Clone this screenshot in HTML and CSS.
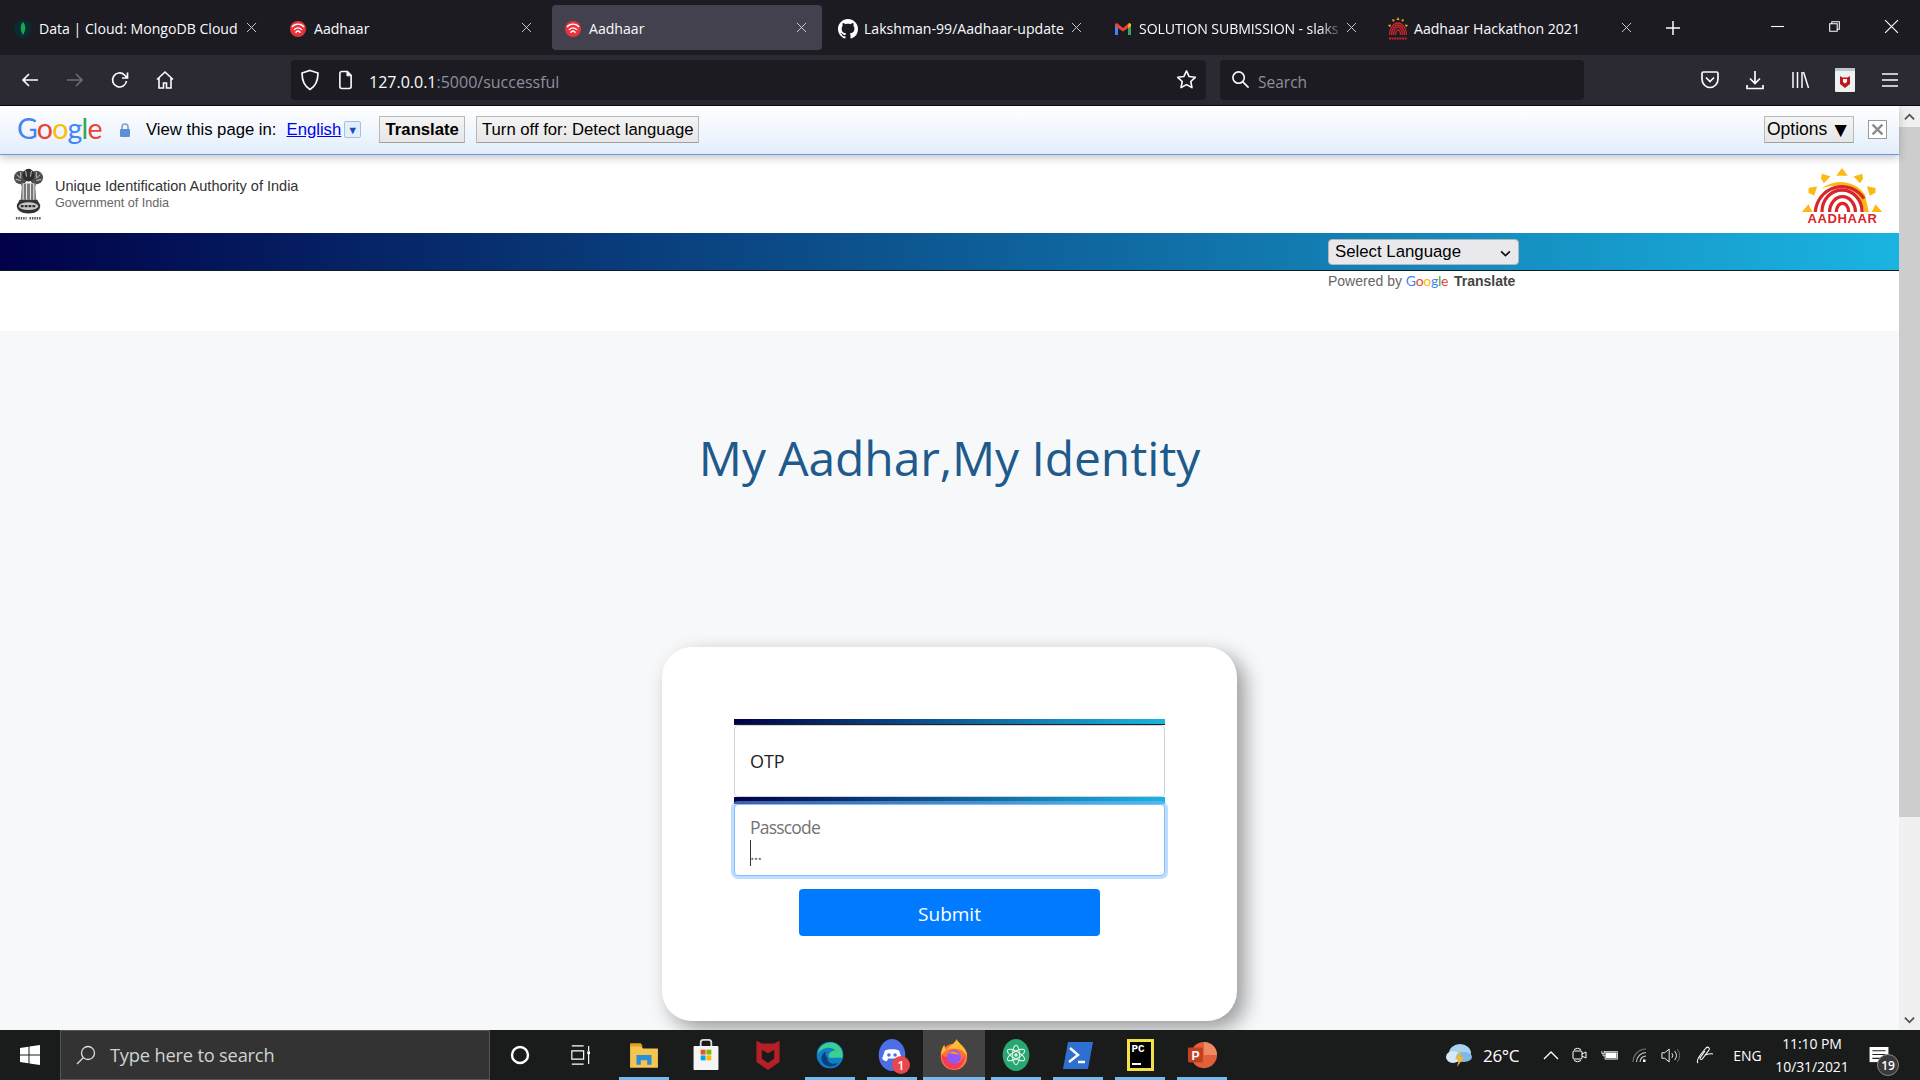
FILE: index.html
```html
<!DOCTYPE html>
<html lang="en">
<head>
<meta charset="utf-8">
<title>Aadhaar</title>
<link rel="stylesheet" href="styles.css">
</head>
<body>
<div class="tabbar">
  <div class="tab"><svg class="fav" viewBox="0 0 18 18"><circle cx="9" cy="9" r="9" fill="#0b2b33"/><path d="M9 2c3 3.500 3 8 0 13-3-5-3-9.500 0-13z" fill="#13aa52"/></svg><span class="tab-title">Data | Cloud: MongoDB Cloud</span><svg class="tab-x" viewBox="0 0 12 12"><path d="M1 1l10 10M11 1L1 11" stroke="#d6d6da"/></svg></div>
  <div class="tab"><svg class="fav" viewBox="0 0 18 18"><circle cx="9" cy="9" r="8" fill="#e8343c"/><path d="M3 7a7 6 0 0 1 12 0M5 10a4.500 4 0 0 1 8 0M7 13a2 2 0 0 1 4 0" fill="none" stroke="#fff" stroke-width="1.400"/></svg><span class="tab-title">Aadhaar</span><svg class="tab-x" viewBox="0 0 12 12"><path d="M1 1l10 10M11 1L1 11" stroke="#d6d6da"/></svg></div>
  <div class="tab tab-active"><svg class="fav" viewBox="0 0 18 18"><circle cx="9" cy="9" r="8" fill="#e8343c"/><path d="M3 7a7 6 0 0 1 12 0M5 10a4.500 4 0 0 1 8 0M7 13a2 2 0 0 1 4 0" fill="none" stroke="#fff" stroke-width="1.400"/></svg><span class="tab-title">Aadhaar</span><svg class="tab-x" viewBox="0 0 12 12"><path d="M1 1l10 10M11 1L1 11" stroke="#d6d6da"/></svg></div>
  <div class="tab"><svg class="fav fav-gh" viewBox="0 0 16 16"><path fill="#fff" d="M8 0C3.580 0 0 3.580 0 8c0 3.540 2.290 6.530 5.470 7.590.4.070.55-.17.55-.38 0-.19-.01-.82-.01-1.490-2.010.37-2.530-.49-2.690-.94-.09-.23-.48-.94-.82-1.130-.28-.15-.68-.52-.01-.53.63-.01 1.080.58 1.230.82.72 1.210 1.870.87 2.330.66.07-.52.28-.87.51-1.070-1.780-.2-3.640-.89-3.640-3.950 0-.87.31-1.590.82-2.150-.08-.2-.36-1.020.08-2.120 0 0 .67-.21 2.200.82.64-.18 1.320-.27 2-.27.68 0 1.360.09 2 .27 1.530-1.040 2.200-.82 2.200-.82.44 1.100.16 1.920.08 2.120.51.56.82 1.270.82 2.150 0 3.070-1.870 3.750-3.650 3.950.29.25.54.73.54 1.480 0 1.070-.01 1.930-.01 2.200 0 .21.15.46.55.38A8.013 8.013 0 0016 8c0-4.420-3.580-8-8-8z"/></svg><span class="tab-title">Lakshman-99/Aadhaar-update</span><svg class="tab-x" viewBox="0 0 12 12"><path d="M1 1l10 10M11 1L1 11" stroke="#d6d6da"/></svg></div>
  <div class="tab"><svg class="fav" viewBox="0 0 18 18"><path d="M1 15V4l3 2v9z" fill="#4285f4"/><path d="M14 15V6l3-2v11z" fill="#34a853"/><path d="M1 4l2-1 6 5 6-5 2 1v2l-8 5.500L1 6z" fill="#ea4335"/><path d="M14 6l1-3 2 1v2l-3 2z" fill="#fbbc04"/></svg><span class="tab-title tab-fade">SOLUTION SUBMISSION - slaks</span><svg class="tab-x" viewBox="0 0 12 12"><path d="M1 1l10 10M11 1L1 11" stroke="#d6d6da"/></svg></div>
  <div class="tab"><svg class="fav fav-hk" viewBox="0 0 20 23"><g fill="#f0a818"><path d="M10 0l1.500 3h-3z"/><path d="M4 2l3 1-2 2z"/><path d="M16 2l-3 1 2 2z"/><path d="M0 8l3-.5-1 3z"/><path d="M20 8l-3-.5 1 3z"/></g><path d="M1.500 18a8.500 12 0 0 1 17 0M3.500 18a6.500 10 0 0 1 13 0M5.500 18a4.500 8 0 0 1 9 0M7.500 18a2.500 5 0 0 1 5 0" fill="none" stroke="#c9252c" stroke-width="1.300"/><path d="M1 21.500h18" stroke="#c9252c" stroke-width="2" stroke-dasharray="2 .6"/></svg><span class="tab-title">Aadhaar Hackathon 2021</span><svg class="tab-x" viewBox="0 0 12 12"><path d="M1 1l10 10M11 1L1 11" stroke="#d6d6da"/></svg></div>
  <svg class="plus" viewBox="0 0 16 16"><path d="M8 1v14M1 8h14" stroke="#fbfbfe" stroke-width="1.500"/></svg>
  <div class="win-ctrls">
    <svg class="wc" viewBox="0 0 14 14"><path d="M1 7h12" stroke="#fbfbfe"/></svg>
    <svg class="wc" viewBox="0 0 14 14"><path d="M2.500 4.500h7v7h-7zM4.500 4.500v-2h7v7h-2" fill="none" stroke="#fbfbfe"/></svg>
    <svg class="wc" viewBox="0 0 14 14"><path d="M1 1l12 12M13 1L1 13" stroke="#fbfbfe" stroke-width="1.100"/></svg>
  </div>
</div>

<div class="navbar">
  <div class="nb"><svg viewBox="0 0 20 20"><path d="M18 10H3M9 4l-6 6 6 6" fill="none" stroke="#fbfbfe" stroke-width="1.700"/></svg></div>
  <div class="nb"><svg viewBox="0 0 20 20"><path d="M2 10h15M11 4l6 6-6 6" fill="none" stroke="#6e6d75" stroke-width="1.700"/></svg></div>
  <div class="nb"><svg viewBox="0 0 20 20"><path d="M16.500 11a7 7 0 1 1-2-6l2.500 2.500M17.500 2.500v5.500H12" fill="none" stroke="#fbfbfe" stroke-width="1.700"/></svg></div>
  <div class="nb"><svg viewBox="0 0 20 20"><path d="M2 9.500L10 2l8 7.500M4 8v10h4.500v-5h3v5H16V8" fill="none" stroke="#fbfbfe" stroke-width="1.600"/></svg></div>
  <div class="urlbar">
    <svg class="u-shield" viewBox="0 0 20 22"><path d="M10 1.500l8 2.500c0 8-2 13-8 16.500C4 17 2 12 2 4z" fill="none" stroke="#fbfbfe" stroke-width="1.700"/></svg>
    <svg class="u-doc" viewBox="0 0 16 20"><path d="M2 3a2 2 0 0 1 2-2h6l4 4v12a2 2 0 0 1-2 2H4a2 2 0 0 1-2-2z" fill="none" stroke="#fbfbfe" stroke-width="1.700"/><path d="M9.500 1.500v4h4" fill="#fbfbfe" stroke="#fbfbfe"/></svg>
    <span class="url-text"><span class="url-host">127.0.0.1</span>:5000/successful</span>
    <svg class="u-star" viewBox="0 0 22 22"><path d="M11 2l2.800 5.900 6.400.8-4.700 4.400 1.200 6.400-5.700-3.100-5.700 3.100 1.200-6.400L1.800 8.700l6.400-.8z" fill="none" stroke="#fbfbfe" stroke-width="1.700" stroke-linejoin="round"/></svg>
  </div>
  <div class="searchbar">
    <svg class="s-ico" viewBox="0 0 20 20"><circle cx="8" cy="8" r="6" fill="none" stroke="#fbfbfe" stroke-width="1.700"/><path d="M12.500 12.500L18.500 18.500" stroke="#fbfbfe" stroke-width="1.700"/></svg>
    <span class="s-text">Search</span>
  </div>
  <div class="nav-right">
    <div class="nb"><svg viewBox="0 0 20 20"><path d="M2 3.500a1.500 1.500 0 0 1 1.500-1.500h13A1.500 1.500 0 0 1 18 3.500V9a8 8.500 0 0 1-16 0z" fill="none" stroke="#fbfbfe" stroke-width="1.700"/><path d="M6 7.500l4 4 4-4" fill="none" stroke="#fbfbfe" stroke-width="1.700"/></svg></div>
    <div class="nb"><svg viewBox="0 0 20 20"><path d="M10 1v12M5 8.500l5 5 5-5M2 15v3.500h16V15" fill="none" stroke="#fbfbfe" stroke-width="1.700"/></svg></div>
    <div class="nb"><svg viewBox="0 0 20 20"><path d="M3 2v16M7.500 2v16M12 2v16M13.500 2l5 16" fill="none" stroke="#fbfbfe" stroke-width="1.500"/></svg></div>
    <div class="nb"><svg class="mc-ext" viewBox="0 0 20 24"><rect width="20" height="24" rx="1" fill="#eef1f2"/><rect width="20" height="3" fill="#bcc6cf"/><path d="M5 8l2.500 1.500h5L15 8v8l-5 4-5-4z" fill="#c01818"/><path d="M8 11h4v3l-2 1.500L8 14z" fill="#fff"/></svg></div>
    <div class="nb"><svg viewBox="0 0 20 20"><path d="M2 4h16M2 10h16M2 16h16" stroke="#fbfbfe" stroke-width="1.700"/></svg></div>
  </div>
</div>

<div class="viewport">
  <div class="content">
    <div class="translate">
      <span class="g-logo"><span class="c-b">G</span><span class="c-r">o</span><span class="c-y">o</span><span class="c-b">g</span><span class="c-g">l</span><span class="c-r">e</span></span>
      <svg class="lock" viewBox="0 0 12 14"><path d="M3 6V4a3 3 0 0 1 6 0v2" fill="none" stroke="#7a9fd4" stroke-width="1.600"/><rect x="1" y="6" width="10" height="8" rx="1" fill="#5b8fd6"/></svg>
      <span class="t-label">View this page in:</span>
      <a class="t-link" href="#">English</a>
      <span class="t-drop">▼</span>
      <span class="t-btn t-btn-strong">Translate</span>
      <span class="t-btn t-btn-off">Turn off for: Detect language</span>
      <span class="t-btn t-btn-opt">Options<span class="opt-tri">▼</span></span>
      <span class="t-close"><svg viewBox="0 0 12 12"><path d="M1.500 1.500l9 9M10.500 1.500l-9 9" stroke="#8b8b8b" stroke-width="2.200"/></svg></span>
    </div>

    <header class="site-head">
      <svg class="emblem" viewBox="0 0 32 54">
        <g fill="#4d4d4d">
          <ellipse cx="8" cy="9" rx="7" ry="7"/><ellipse cx="24" cy="9" rx="7" ry="7"/><ellipse cx="16" cy="6.500" rx="6" ry="6.500" fill="#2e2e2e"/>
          <path d="M4 6l4 4M8 3v6M13 2l1 6M19 2l-1 6M24 3v6M28 6l-4 4M3 11l5 1M29 11l-5 1" stroke="#e8e8e8" stroke-width=".8"/>
          <path d="M8 15h16l-1 4 1 13H8l1-13z" fill="#777"/>
          <path d="M10.500 15v17M14 15v17M18 15v17M21.500 15v17" stroke="#f2f2f2" stroke-width="1"/>
          <path d="M7 32h18l3 5c1 6-5 9-12 9S3 43 4 37z" fill="#333"/>
          <ellipse cx="16" cy="38.500" rx="10" ry="4" fill="#c9c9c9"/>
          <path d="M8 38.500h16" stroke="#333" stroke-width="2.200" stroke-dasharray="3 1"/>
          <path d="M3 51h11M17 51h12" stroke="#555" stroke-width="2.400" stroke-dasharray="1.500 1"/>
        </g>
      </svg>
      <div class="org">
        <div class="org-name">Unique Identification Authority of India</div>
        <div class="org-sub">Government of India</div>
      </div>
      <div class="aadhaar-logo">
        <svg viewBox="0 0 85 46" class="aad-svg">
          <g fill="#fdb913">
            <path d="M42 0l6 8h-12z"/><path d="M21 6l9 3-7 7-3-5z"/><path d="M63 6l-9 3 7 7 3-5z"/>
            <path d="M7 21l9-2-3 10-6-3z"/><path d="M77 21l-9-2 3 10 6-3z"/>
            <path d="M0 46l7-8 4 8z"/><path d="M84 46l-7-8-4 8z"/>
            <path d="M20 22a30 28 0 0 1 46 6l4 18h-5c-1-12-8-24-22-27-10-1-17 0-23 3z"/>
          </g>
          <g fill="none" stroke="#d9252b" stroke-width="3.400">
            <path d="M14 46a28 29 0 0 1 51-14"/>
            <path d="M21 46a21 23 0 0 1 42 0"/>
            <path d="M29 46a13.500 16 0 0 1 27 0"/>
            <path d="M36 46a6.500 9 0 0 1 13 0"/>
          </g>
        </svg>
        <span class="aad-word">AADHAAR</span>
      </div>
    </header>

    <div class="grad-bar">
      <div class="lang-wrap">
        <select class="lang"><option>Select Language</option></select>
        <svg class="lang-arrow" viewBox="0 0 10 6"><path d="M1 1l4 4 4-4" fill="none" stroke="#111" stroke-width="1.500"/></svg>
      </div>
    </div>
    <div class="powered">
      <span class="pw">Powered by <span class="pw-g"><span class="c-b">G</span><span class="c-r">o</span><span class="c-y">o</span><span class="c-b">g</span><span class="c-g">l</span><span class="c-r">e</span></span> <b class="pw-t">Translate</b></span>
    </div>

    <main class="stage">
      <h1 class="motto">My Aadhar,My Identity</h1>
      <section class="card">
        <div class="strip"></div>
        <div class="field"><span class="f-value">OTP</span></div>
        <div class="strip strip-2"></div>
        <div class="field field-focus">
          <span class="f-ph">Passcode</span>
          <span class="f-ph f-ph-2"><span class="caret"></span>...</span>
        </div>
        <button class="submit">Submit</button>
      </section>
    </main>
  </div>
  <div class="scroll">
    <div class="sc-btn"><svg viewBox="0 0 12 8"><path d="M1 6.500l5-5 5 5" fill="none" stroke="#505050" stroke-width="2"/></svg></div>
    <div class="sc-thumb"></div>
    <div class="sc-track"></div>
    <div class="sc-btn"><svg viewBox="0 0 12 8"><path d="M1 1.500l5 5 5-5" fill="none" stroke="#505050" stroke-width="2"/></svg></div>
  </div>
</div>

<footer class="taskbar">
  <div class="start"><svg viewBox="0 0 20 20"><path fill="#fff" d="M0 3l8.500-1.200V9.500H0zM9.500 1.600L20 0v9.500H9.500zM0 10.500h8.500v7.700L0 17zM9.500 10.500H20V20L9.500 18.400z"/></svg></div>
  <div class="tb-search">
    <svg viewBox="0 0 20 20" class="tb-mag"><circle cx="12" cy="8" r="6.500" fill="none" stroke="#ddd" stroke-width="1.300"/><path d="M7.500 12.500L1 19" stroke="#ddd" stroke-width="1.300"/></svg>
    <span class="tb-placeholder">Type here to search</span>
  </div>
  <div class="tb-cortana"><svg viewBox="0 0 20 20"><circle cx="10" cy="10" r="8" fill="none" stroke="#fff" stroke-width="2.400"/></svg></div>
  <div class="tb-tv"><svg viewBox="0 0 22 22"><path d="M2 1h13M2 21h13M2 6.500h13v9H2zM20.500 1v6M20.500 10v11" fill="none" stroke="#fff" stroke-width="1.300"/><rect x="19" y="7" width="3" height="3" fill="#fff"/></svg></div>

  <div class="app app-on"><svg viewBox="0 0 28 28"><path d="M1 5h10l2 3h14v18H1z" fill="#f5c451"/><path d="M1 3h10l2 3H1z" fill="#e0a21b"/><path d="M7 14h14v9h-4v-4h-6v4H7z" fill="#2b8fd8"/></svg></div>
  <div class="app"><svg viewBox="0 0 30 36"><path d="M9 8V4a3 3 0 0 1 3-3h6a3 3 0 0 1 3 3v4" fill="none" stroke="#ddd" stroke-width="2"/><rect x="1" y="8" width="28" height="27" rx="1" fill="#f4f4f4"/><rect x="9" y="12" width="5.500" height="5.500" fill="#f25022"/><rect x="15.500" y="12" width="5.500" height="5.500" fill="#7fba00"/><rect x="9" y="18.500" width="5.500" height="5.500" fill="#00a4ef"/><rect x="15.500" y="18.500" width="5.500" height="5.500" fill="#ffb900"/></svg></div>
  <div class="app"><svg viewBox="0 0 28 36"><path d="M1 2l6 3h14l6-3v24l-13 9L1 26z" fill="#b42025"/><path d="M7 12l7 4 7-4v10l-7 5-7-5z" fill="#1a1c1c"/></svg></div>
  <div class="app app-on"><svg viewBox="0 0 30 36"><circle cx="15" cy="18" r="15" fill="#0f7fc9"/><path d="M1 17C3 5 14 2 21 5c6 3 9 9 8 16H14c-2-4 2-8 7-8-4-5-15-4-20 4z" fill="#3ecf8e"/><path d="M12 21c0 6 6 8 12 6-4 6-15 5-18-2-2-5 1-10 5-11-2 2-1 4 1 7z" fill="#0a3f78"/></svg></div>
  <div class="app app-on app-rel"><svg viewBox="0 0 30 36"><ellipse cx="15" cy="18" rx="15" ry="18" fill="#4d6ee6"/><path d="M7 13c4-2 12-2 16 0l3 9c-2 2-4 3-5 3l-2-3h-8l-2 3c-2 0-4-1-5-3z" fill="#fff"/><circle cx="11.500" cy="18" r="2" fill="#4d6ee6"/><circle cx="18.500" cy="18" r="2" fill="#4d6ee6"/></svg><span class="app-badge">1</span></div>
  <div class="app app-on app-active"><svg viewBox="0 0 30 34"><circle cx="15" cy="19" r="14" fill="#ff7139"/><path d="M1 19C1 12 3 8 5 6c0 3 .5 5 2 6 2-4 8-6 11-12 1 5 11 8 11 19-3-6-7-9-13-9-7 0-13 3-15 9z" fill="#ffbd2e"/><path d="M2 16c3 4 6 4 7 0 0 7 3 10 7 10 6 0 9-4 10-10 1 8-4 16-11 16S1 25 2 16z" fill="#f53b57"/><circle cx="15" cy="19" r="7.500" fill="#9059ff"/><path d="M9 15c4-3 10-2 12 2-3-1-8-1-12-2z" fill="#ff980e"/></svg></div>
  <div class="app app-on"><svg viewBox="0 0 30 36"><ellipse cx="15" cy="18" rx="15" ry="18" fill="#28a870"/><g fill="none" stroke="#dff5e8" stroke-width="1.200"><ellipse cx="15" cy="18" rx="4" ry="11"/><ellipse cx="15" cy="18" rx="4" ry="11" transform="rotate(60 15 18)"/><ellipse cx="15" cy="18" rx="4" ry="11" transform="rotate(120 15 18)"/></g><circle cx="15" cy="18" r="2" fill="#dff5e8"/></svg></div>
  <div class="app app-on"><svg viewBox="0 0 30 28"><path d="M5 1h25l-5 27H0z" fill="#2f6fd0"/><path d="M7 7l8 7-9 7M15 21h7" fill="none" stroke="#fff" stroke-width="2.400"/></svg></div>
  <div class="app app-on"><span class="pc-ico"><span class="pc-txt">PC</span><span class="pc-line"></span></span></div>
  <div class="app app-on"><svg viewBox="0 0 32 32"><circle cx="18" cy="16" r="14" fill="#e0603a"/><path d="M18 2a14 14 0 0 1 14 14H18z" fill="#f08a64"/><rect x="1" y="8" width="16" height="16" rx="1.500" fill="#c2401f"/><text x="9" y="21" class="ppt-p">P</text></svg></div>

  <div class="tray">
    <div class="tr tr-w"><svg viewBox="0 0 28 24"><ellipse cx="15" cy="10" rx="11" ry="9" fill="#a8d2f0"/><ellipse cx="8" cy="14" rx="7" ry="6" fill="#d5e9f8"/><ellipse cx="19" cy="14" rx="8" ry="5" fill="#7fb8e8"/><path d="M16 7l-6 9h4l-2 8 7-10h-4z" fill="#f7b71d"/></svg></div>
    <div class="tr tr-temp">26°C</div>
    <div class="tr tr-s"><svg viewBox="0 0 16 10"><path d="M1 9l7-7 7 7" fill="none" stroke="#fff" stroke-width="1.300"/></svg></div>
    <div class="tr tr-m"><svg viewBox="0 0 16 16"><rect x="1" y="4" width="9" height="8" rx="1" fill="none" stroke="#fff"/><path d="M10 7l4-2v6l-4-2M2 2.500a6 6 0 0 1 7 0M2 13.500a6 6 0 0 0 7 0" fill="none" stroke="#fff"/></svg></div>
    <div class="tr tr-m"><svg viewBox="0 0 22 12"><path d="M1 1v3h3V1M2.500 4v3h3" fill="none" stroke="#fff"/><rect x="5" y="2" width="15" height="9" fill="none" stroke="#fff"/><rect x="6" y="3" width="13" height="7" fill="#fff"/></svg></div>
    <div class="tr tr-m"><svg viewBox="0 0 16 16"><path d="M1 15A13 13 0 0 1 14 2" fill="none" stroke="#777" stroke-width="1.100"/><path d="M4.500 15A9.500 9.500 0 0 1 14 5.500M8 15a6 6 0 0 1 6-6" fill="none" stroke="#ccc" stroke-width="1.100"/><rect x="11" y="12.500" width="2.500" height="2.500" fill="#fff"/></svg></div>
    <div class="tr tr-v"><svg viewBox="0 0 22 18"><path d="M1 6h3l5-4v14l-5-4H1z" fill="none" stroke="#fff"/><path d="M12 6.500a4 4 0 0 1 0 5M15 4a8 8 0 0 1 0 10" fill="none" stroke="#fff"/><path d="M18 2a11 11 0 0 1 0 14" fill="none" stroke="#777"/></svg></div>
    <div class="tr tr-p"><svg viewBox="0 0 20 20"><path d="M3 18c-2-2 0-5 3-9l5-6c2-2 4 0 3 2l-6 8c-1 2-3 2-3 0l5-7M10 10c3-1 6-2 8-1" fill="none" stroke="#fff" stroke-width="1.100"/></svg></div>
    <div class="tr tr-eng">ENG</div>
    <div class="tr tr-clock"><span>11:10 PM</span><span>10/31/2021</span></div>
    <div class="tr tr-notif">
      <svg viewBox="0 0 20 18"><path d="M0 0h20v16H0z" fill="#fff"/><path d="M3 4h14M3 8h14M3 12h10" stroke="#222" stroke-width="1.200"/></svg>
      <span class="notif-count">19</span>
    </div>
  </div>
</footer>
</body>
</html>
```

FILE: styles.css
```css
* { box-sizing: border-box; }
html, body { margin: 0; padding: 0; }
body {
  width: 1920px;
  height: 1080px;
  overflow: hidden;
  display: flex;
  flex-direction: column;
  font-family: "Open Sans", "Noto Sans", sans-serif;
  background: #f7f8fa;
}
svg { display: block; }

/* Tab strip */
.tabbar {
  height: 55px;
  background: #1c1b22;
  display: flex;
  align-items: flex-start;
  padding: 5px 0 0 2px;
  gap: 5px;
  flex: none;
}
.tab {
  width: 270px;
  height: 45px;
  border-radius: 4px;
  display: flex;
  align-items: center;
  padding: 2px 12px 0 12px;
  color: #fbfbfe;
  position: relative;
}
.tab-active { background: #42414d; }
.fav { width: 18px; height: 18px; flex: none; margin-right: 7px; }
.fav-gh { width: 20px; height: 20px; margin-left: -1px; margin-right: 6px; }
.fav-hk { width: 20px; height: 23px; margin-left: -1px; margin-right: 6px; }
.tab-title {
  font-size: 14.100px;
  white-space: nowrap;
  flex: 1;
  min-width: 0;
}
.tab-fade { letter-spacing: -.1px; -webkit-mask-image: linear-gradient(to right, #000 88%, transparent 100%); mask-image: linear-gradient(to right, #000 88%, transparent 100%); }
.tab-x { width: 11px; height: 11px; flex: none; margin: -3px 3px 0 2px; }
.plus { width: 16px; height: 16px; margin: 15px 0 0 13px; flex: none; }
.win-ctrls { display: flex; margin-left: auto; margin-top: 14px; padding-right: 21px; gap: 42px; }
.wc { width: 15px; height: 15px; }

/* Navigation bar */
.navbar {
  height: 51px;
  flex: none;
  background: #2b2a33;
  border-bottom: 1px solid #0c0c0d;
  display: flex;
  align-items: center;
  padding: 0 0 1px 7px;
}
.nb { width: 45px; height: 40px; display: flex; align-items: center; justify-content: center; flex: none; }
.nb svg { width: 20px; height: 20px; }
.nb .mc-ext { width: 20px; height: 24px; }
.urlbar {
  margin-left: 104px;
  width: 915px;
  height: 40px;
  background: #1c1b22;
  border-radius: 4px;
  display: flex;
  align-items: center;
  padding-left: 9px;
  flex: none;
}
.u-shield { width: 20px; height: 22px; margin-right: 18px; }
.u-doc { width: 15px; height: 20px; margin-right: 16px; }
.url-text { font-size: 16px; color: #8f8f9d; flex: 1; padding-top: 4px; }
.url-host { color: #fbfbfe; }
.u-star { width: 21px; height: 21px; margin-right: 9px; }
.searchbar {
  margin-left: 14px;
  width: 364px;
  height: 40px;
  background: #1c1b22;
  border-radius: 4px;
  display: flex;
  align-items: center;
  padding-left: 11px;
  flex: none;
}
.s-ico { width: 19px; height: 19px; margin-right: 8px; }
.s-text { font-size: 15.500px; color: #8f8f9d; padding-top: 4px; }
.nav-right { display: flex; margin-left: 103px; flex: none; }

/* Browser viewport */
.viewport { flex: 1; display: flex; min-height: 0; }
.content { flex: 1; display: flex; flex-direction: column; min-width: 0; }

.translate {
  height: 49px;
  flex: none;
  position: relative;
  z-index: 2;
  background: linear-gradient(to bottom, #fff 0%, #e3eefb 100%);
  border-bottom: 1px solid #6d97e4;
  box-shadow: 0 3px 8px rgba(0,0,0,.22);
  display: flex;
  align-items: center;
  padding: 0 12px 1px 17px;
  font-family: "Liberation Sans", Arial, sans-serif;
  font-size: 16.700px;
  color: #000;
}
.g-logo { font-family: "Lato", "Open Sans", sans-serif; font-size: 28.500px; letter-spacing: -.8px; line-height: 1; width: 89px; margin-top: -3px; flex: none; }
.c-b { color: #4285f4; } .c-r { color: #ea4335; } .c-y { color: #fbbc05; } .c-g { color: #34a853; }
.lock { width: 12px; height: 14px; margin: 0 15px 0 13px; flex: none; }
.t-label { margin-right: 10px; white-space: nowrap; }
.t-link { color: #00e; text-decoration: underline; }
.t-drop {
  width: 17px; height: 17px; margin: 0 18px 0 3px;
  border: 1px solid #a5bfe6; border-radius: 2px; background: #e3eefb;
  font-size: 11px; color: #1a4fb0; display: flex; align-items: center; justify-content: center;
  flex: none;
}
.t-btn {
  height: 27px;
  display: flex;
  align-items: center;
  padding: 0 5px;
  background: linear-gradient(#f4f4f4, #e6e6e6);
  border: 1px solid #b8b8b8;
  border-bottom-color: #a0a0a0;
  white-space: nowrap;
  flex: none;
}
.t-btn-strong { font-weight: 700; width: 86px; justify-content: center; margin-right: 11px; }
.t-btn-off { width: 223px; justify-content: center; }
.t-btn-opt { margin-left: auto; width: 90px; justify-content: center; font-size: 17.500px; }
.opt-tri { font-size: 21px; margin-left: 3px; line-height: 1; }
.t-close { width: 19px; height: 19px; margin-left: 14px; border: 1px solid #9a9a9a; background: #fff; padding: 2px; flex: none; }

.site-head {
  height: 78px;
  flex: none;
  background: #fff;
  display: flex;
  align-items: flex-start;
  padding: 13px 14px 0 13px;
  font-family: "Liberation Sans", Arial, sans-serif;
}
.emblem { width: 31px; height: 54px; flex: none; margin-right: 11px; }
.org { padding-top: 10px; }
.org-name { font-size: 14.500px; color: #333; line-height: 17px; }
.org-sub { font-size: 12.600px; color: #666; line-height: 17px; }
.aadhaar-logo { margin-left: auto; width: 85px; display: flex; flex-direction: column; align-items: center; }
.aad-svg { width: 85px; height: 44px; }
.aad-word { font-size: 13px; font-weight: 700; color: #d9252b; letter-spacing: .6px; line-height: 14px; }

.grad-bar {
  height: 38px;
  flex: none;
  background: linear-gradient(to right, #010148, #1ab4e1);
  border-bottom: 1px solid #0e1a22;
  padding: 6px 0 0 1328px;
}
.lang-wrap { position: relative; width: 191px; height: 26px; }
.lang {
  display: block;
  width: 191px;
  height: 26px;
  padding: 0 0 2px 6px;
  font-family: "Liberation Sans", Arial, sans-serif;
  font-size: 16.800px;
  color: #000;
  background: #e9e9ed;
  border: 1px solid #b5b5b5;
  border-radius: 4px;
  appearance: none;
  -webkit-appearance: none;
}
.lang-arrow { position: absolute; right: 8px; top: 11px; width: 11px; height: 7px; }
.powered {
  height: 60px;
  flex: none;
  background: #fff;
  padding: 1px 0 0 1328px;
  font-family: "Liberation Sans", Arial, sans-serif;
}
.pw { font-size: 14px; color: #666; white-space: nowrap; display: block; line-height: 18px; }
.pw-g { font-family: "Lato", sans-serif; font-size: 14px; font-weight: 400; letter-spacing: -.3px; }
.pw-t { color: #444; margin-left: 2px; }

/* Page content */
.stage {
  flex: 1;
  min-height: 0;
  background: #f7f8fa;
  display: flex;
  flex-direction: column;
  align-items: center;
  padding-top: 92px;
  position: relative;
  z-index: 1;
}
.motto {
  margin: 0;
  height: 70px;
  line-height: 70px;
  font-size: 48px;
  font-weight: 400;
  letter-spacing: -0.1px;
  color: #1f5a8c;
  white-space: nowrap;
}
.card {
  margin-top: 154px;
  width: 575px;
  background: #fff;
  border-radius: 30px;
  padding: 72px 72px 85px;
  box-shadow: 8px 8px 20px rgba(0,0,0,.38);
  display: flex;
  flex-direction: column;
  align-items: center;
  flex: none;
}
.strip {
  width: 100%;
  height: 6px;
  background: linear-gradient(to right, #010148, #1ab4e1);
  border-bottom: 1px solid #222;
}
.strip-2 { height: 7px; border-bottom: none; }
.field {
  width: 100%;
  height: 72px;
  border: 1px solid #ced4da;
  border-radius: 4px;
  background: #fff;
  padding: 0 15px;
  display: flex;
  flex-direction: column;
  justify-content: center;
  font-size: 17.500px;
}
.field-focus {
  border-color: #80bdff;
  box-shadow: 0 0 0 3px rgba(128,189,255,.5);
  height: 72px;
  position: relative;
}
.f-value { color: #222; font-size: 18px; letter-spacing: -.1px; }
.f-ph { color: #737373; line-height: 26px; letter-spacing: -.8px; }
.f-ph-2 { display: flex; align-items: center; }
.caret { width: 1px; height: 26px; background: #333; margin-right: -1px; }
.submit {
  margin-top: 13px;
  width: 301px;
  height: 47px;
  border: none;
  border-radius: 4px;
  background: #007bff;
  color: #fff;
  font-family: inherit;
  font-size: 19px;
  padding: 2px 0 0;
}

/* Scrollbar */
.scroll { width: 21px; flex: none; background: #f0f0f0; display: flex; flex-direction: column; }
.sc-btn { height: 21px; display: flex; align-items: center; justify-content: center; flex: none; }
.sc-btn svg { width: 11px; height: 8px; }
.sc-thumb { height: 690px; background: #cdcdcd; flex: none; }
.sc-track { flex: 1; }

/* Taskbar */
.taskbar {
  height: 50px;
  flex: none;
  background: #1a1c1c;
  display: flex;
  align-items: stretch;
  position: relative;
  z-index: 3;
  color: #fff;
}
.start { width: 60px; display: flex; align-items: center; justify-content: center; flex: none; }
.start svg { width: 20px; height: 20px; }
.tb-search {
  width: 430px;
  flex: none;
  background: #333;
  border: 1px solid #555;
  display: flex;
  align-items: center;
  padding-left: 15px;
}
.tb-mag { width: 20px; height: 20px; margin-right: 14px; }
.tb-placeholder { font-size: 18.300px; color: #cfd3d6; letter-spacing: -.2px; padding-bottom: 2px; }
.tb-cortana { width: 60px; display: flex; align-items: center; justify-content: center; flex: none; }
.tb-cortana svg { width: 20px; height: 20px; }
.tb-tv { width: 63px; display: flex; align-items: center; justify-content: center; flex: none; padding-right: 4px; }
.tb-tv svg { width: 20px; height: 22px; }
.app { width: 62px; display: flex; align-items: center; justify-content: center; flex: none; position: relative; }
.app svg { width: 30px; height: 32px; }
.app-on::after { content: ""; position: absolute; left: 6px; right: 6px; bottom: 0; height: 3px; background: #76b9ed; }
.app-active { background: #444; }
.app-active::after { left: 0; right: 0; }
.app-badge {
  position: absolute; right: 13px; bottom: 6px;
  width: 18px; height: 18px; border-radius: 50%;
  background: #e8474c; color: #fff; font-size: 12px; font-weight: 600;
  display: flex; align-items: center; justify-content: center;
}
.pc-ico {
  width: 27px; height: 32px; background: #000; border: 3px solid #f4e04a;
  display: flex; flex-direction: column; padding: 1px 2px;
}
.pc-txt { font-family: "Liberation Mono", monospace; font-size: 11px; font-weight: 700; line-height: 12px; color: #fff; }
.pc-line { width: 9px; height: 2px; background: #fff; margin-top: auto; margin-bottom: 2px; }
.ppt-p { font-family: "Liberation Sans", sans-serif; font-size: 13px; font-weight: 700; fill: #fff; text-anchor: middle; }

.tray { margin-left: auto; display: flex; align-items: stretch; flex: none; width: 477px; }
.tr { display: flex; align-items: center; justify-content: center; flex: none; }
.tr-w { width: 32px; }
.tr-w svg { width: 28px; height: 24px; }
.tr-temp { width: 62px; justify-content: flex-start; padding-left: 8px; font-size: 17px; letter-spacing: -.3px; }
.tr-s { width: 28px; }
.tr-s svg { width: 16px; height: 10px; }
.tr-m { width: 30px; }
.tr-m svg { width: 18px; height: 16px; }
.tr-v { width: 32px; }
.tr-v svg { width: 20px; height: 17px; }
.tr-p { width: 36px; }
.tr-p svg { width: 20px; height: 20px; }
.tr-eng { width: 49px; font-size: 14px; }
.tr-clock { width: 80px; flex-direction: column; font-size: 14px; line-height: 23px; letter-spacing: -.1px; white-space: nowrap; }
.tr-notif { width: 68px; position: relative; justify-content: flex-start; padding-left: 17px; }
.tr-notif svg { width: 20px; height: 17px; }
.notif-count {
  position: absolute; left: 25px; top: 24px;
  width: 22px; height: 22px; border-radius: 50%;
  border: 1px solid #888; background: #3a3a3a; color: #fff;
  font-size: 12px; font-weight: 600;
  display: flex; align-items: center; justify-content: center;
}
```
